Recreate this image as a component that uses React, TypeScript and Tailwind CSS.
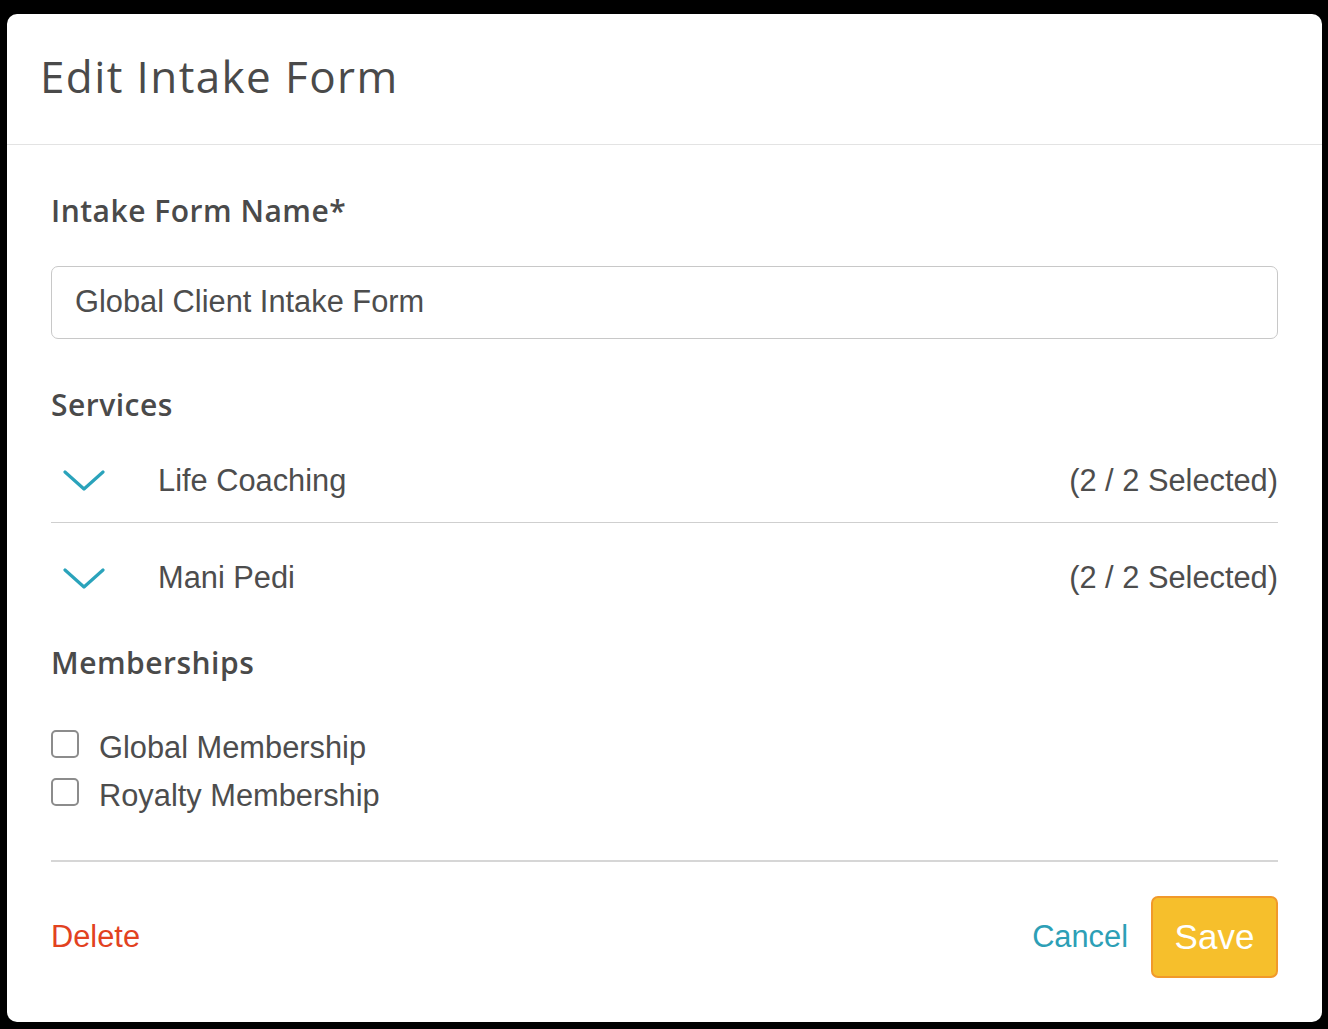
import React from "react";

const sans = { fontFamily: '"Liberation Sans", Arial, sans-serif' };
const head = { fontFamily: '"Open Sans", Lato, sans-serif' };

function Chevron() {
  return (
    <svg width="42" height="22" viewBox="0 0 42 22" fill="none">
      <path d="M2 2 L21 19 L40 2" stroke="#2aa3bb" strokeWidth="3.2" strokeLinecap="round" strokeLinejoin="round" />
    </svg>
  );
}

function ServiceRow({ name, border }: { name: string; border?: boolean }) {
  return (
    <div className={`flex items-center h-[83px] ${border ? "border-b border-[#cfcfcf]" : ""}`}>
      <div className="w-[107px] pl-[12px] flex items-center">
        <Chevron />
      </div>
      <div className="flex-1 text-[30.8px] text-[#4d4d4d]" style={sans}>{name}</div>
      <div className="text-[30.8px] text-[#4d4d4d]" style={sans}>(2 / 2 Selected)</div>
    </div>
  );
}

function CheckRow({ label }: { label: string }) {
  return (
    <div className="flex items-start h-[48px]">
      <div className="mt-[6px] w-[28px] h-[28px] rounded-[5px] border-2 border-[#8c8c8c] bg-white" />
      <div className="ml-[20px] text-[30.8px] leading-[48px] text-[#4d4d4d]" style={sans}>{label}</div>
    </div>
  );
}

export default function App() {
  return (
    <div className="w-[1328px] h-[1029px] bg-black pt-[14px] pl-[7px] pr-[6px] pb-[7px]">
      <div className="w-full h-full bg-white rounded-[10px] flex flex-col overflow-hidden">
        <div className="h-[131px] border-b border-[#e3e3e3] flex items-center pl-[33px] pb-[6px]">
          <h1 className="text-[44px] tracking-[1.4px] text-[#4a4a4a] font-normal" style={head}>Edit Intake Form</h1>
        </div>
        <div className="px-[44px] pt-[48px] flex flex-col">
          <div className="text-[30px] leading-[36px] font-semibold tracking-[0.5px] text-[#4a4a4a]" style={head}>Intake Form Name*</div>
          <div className="mt-[37px] h-[73px] border border-[#c8c8c8] rounded-[7px] flex items-center px-[23px]">
            <span className="text-[30.8px] text-[#4d4d4d]" style={sans}>Global Client Intake Form</span>
          </div>
          <div className="mt-[48px] text-[30px] leading-[36px] font-semibold tracking-[0.5px] text-[#4a4a4a]" style={head}>Services</div>
          <div className="mt-[17px]">
            <ServiceRow name="Life Coaching" border />
          </div>
          <div className="mt-[14px]">
            <ServiceRow name="Mani Pedi" />
          </div>
          <div className="mt-[25px] text-[30px] leading-[36px] font-semibold tracking-[0.5px] text-[#4a4a4a]" style={head}>Memberships</div>
          <div className="mt-[43px] flex flex-col">
            <CheckRow label="Global Membership" />
            <CheckRow label="Royalty Membership" />
          </div>
          <div className="mt-[40px] border-t-2 border-[#d6d6d6]" />
          <div className="mt-[34px] flex items-center justify-between">
            <button className="text-[30.8px] text-[#e2421f]" style={sans}>Delete</button>
            <div className="flex items-center">
              <button className="text-[30.8px] text-[#2d9fb6] mr-[23px]" style={sans}>Cancel</button>
              <button className="w-[127px] h-[82px] rounded-[7px] bg-[#f6bf2c] border-2 border-[#f1992a] text-white text-[35px]" style={sans}>Save</button>
            </div>
          </div>
        </div>
      </div>
    </div>
  );
}
